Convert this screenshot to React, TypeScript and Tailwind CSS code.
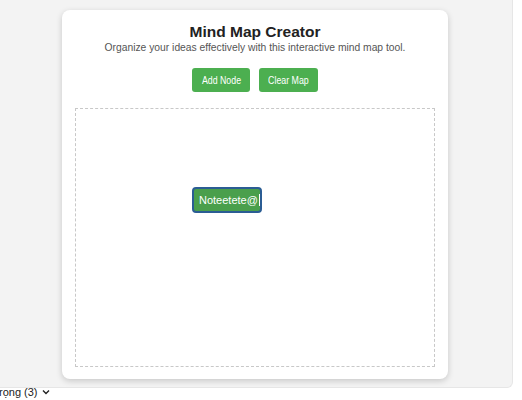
import React from "react";

export default function App() {
  return (
    <div className="w-[522px] h-[400px] bg-white overflow-hidden relative" style={{ fontFamily: '"Liberation Sans", Arial, sans-serif' }}>
      <div className="w-[513px] h-[388px] bg-[#f3f3f3] rounded-br-[6px] border-r border-b border-[#e6e6e6] pt-[10px] pl-[62px]">
        <div className="w-[386px] h-[369px] bg-white rounded-[8px] shadow-[0_2px_6px_rgba(0,0,0,0.18)] px-[13px] pt-[13px] flex flex-col items-center">
          <h1 className="text-[15.5px] leading-[18px] font-bold text-[#222]">Mind Map Creator</h1>
          <p className="text-[10.3px] leading-[12px] text-[#555] mt-[1px]">Organize your ideas effectively with this interactive mind map tool.</p>
          <div className="flex gap-[9px] mt-[14px]">
            <button className="h-[24px] w-[58px] bg-[#4caf50] text-white text-[11px] rounded-[3px] flex items-center justify-center">
              <span className="inline-block scale-x-[0.8] whitespace-nowrap">Add Node</span>
            </button>
            <button className="h-[24px] w-[59px] bg-[#4caf50] text-white text-[11px] rounded-[3px] flex items-center justify-center">
              <span className="inline-block scale-x-[0.8] whitespace-nowrap">Clear Map</span>
            </button>
          </div>
          <div className="relative mt-[16px] w-[360px] h-[259px] border border-dashed border-[#c8c8c8]">
            <div className="absolute left-[116px] top-[78px] w-[70px] h-[26px] bg-[#4a9f4c] border-2 border-[#2b5d94] rounded-[4px] flex items-center pl-[5px] text-white text-[11px]">
              Noteetete@<span className="inline-block w-[1px] h-[12px] bg-white ml-[1px]" />
            </div>
          </div>
        </div>
      </div>
      <div className="flex items-center gap-[4px] -ml-[1px] text-[11px] leading-[12px] text-[#222] mt-[-2px]">
        <span>rọng (3)</span>
        <svg width="8" height="6" viewBox="0 0 8 6"><path d="M1 1.5 L4 4.5 L7 1.5" stroke="#222" strokeWidth="1.4" fill="none" /></svg>
      </div>
    </div>
  );
}
